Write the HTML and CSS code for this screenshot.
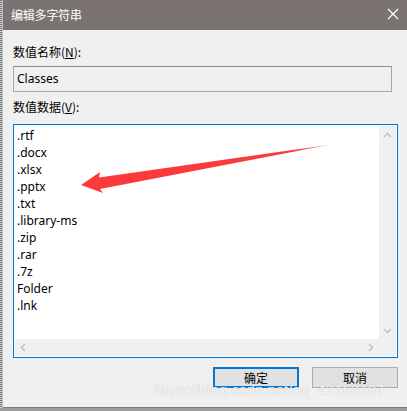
FILE: index.html
```html
<!DOCTYPE html>
<html lang="zh-CN">
<head>
<meta charset="utf-8">
<title>编辑多字符串</title>
<link rel="stylesheet" href="styles.css">
</head>
<body>
<div class="screen">
  <div class="edge"></div>
  <div class="window">
    <div class="titlebar">
      <span class="title">编辑多字符串</span>
      <svg class="close" width="12" height="12" viewBox="0 0 12 12"><path d="M1 1 L11 11 M11 1 L1 11" stroke="#fff" stroke-width="1.2" fill="none"/></svg>
    </div>
    <div class="content">
      <div class="label">数值名称(<u>N</u>):</div>
      <div class="textbox">Classes</div>
      <div class="label label2">数值数据(<u>V</u>):</div>
      <div class="listbox">
        <div class="list">
          <div>.rtf</div>
          <div>.docx</div>
          <div>.xlsx</div>
          <div>.pptx</div>
          <div>.txt</div>
          <div>.library-ms</div>
          <div>.zip</div>
          <div>.rar</div>
          <div>.7z</div>
          <div>Folder</div>
          <div>.lnk</div>
        </div>
        <div class="vscroll">
          <svg width="9" height="6" viewBox="0 0 9 6"><path d="M1 5 L4.5 1.5 L8 5" stroke="#c2c2c2" stroke-width="1.6" fill="none"/></svg>
          <svg width="9" height="6" viewBox="0 0 9 6"><path d="M1 1 L4.5 4.5 L8 1" stroke="#c2c2c2" stroke-width="1.6" fill="none"/></svg>
        </div>
        <div class="hscroll">
          <svg width="6" height="9" viewBox="0 0 6 9"><path d="M5 1 L1.5 4.5 L5 8" stroke="#c2c2c2" stroke-width="1.6" fill="none"/></svg>
          <svg width="6" height="9" viewBox="0 0 6 9"><path d="M1 1 L4.5 4.5 L1 8" stroke="#c2c2c2" stroke-width="1.6" fill="none"/></svg>
        </div>
        <div class="corner"></div>
      </div>
      <div class="buttons">
        <div class="btn btn-default">确定</div>
        <div class="btn">取消</div>
      </div>
    </div>
  </div>
  <div class="watermark">https://blog.csdn.net/qq_42168187</div>
  <svg class="arrow" width="407" height="411" viewBox="0 0 407 411">
    <defs>
      <linearGradient id="fade" x1="80" y1="0" x2="332" y2="0" gradientUnits="userSpaceOnUse">
        <stop offset="0.85" stop-color="#fb3b3b"/>
        <stop offset="1" stop-color="#fb3b3b" stop-opacity="0.3"/>
      </linearGradient>
    </defs>
    <polygon points="81,185 100,172 99,177.5 331,144.5 100,189 103,193" fill="url(#fade)"/>
  </svg>
</div>
</body>
</html>
```

FILE: styles.css
```css
* { box-sizing: border-box; }
html, body { margin: 0; padding: 0; }
body {
  width: 407px;
  height: 411px;
  overflow: hidden;
  background: #9c9c9c;
  font-family: "Noto Sans", "Noto Sans CJK SC", sans-serif;
  font-size: 12px;
  color: #000;
}
.screen {
  position: relative;
  width: 407px;
  height: 411px;
  display: flex;
}
.edge {
  width: 3px;
  height: 408px;
  background: repeating-linear-gradient(#6e6e6e 0 1px, #d8d8d8 1px 2px);
  border-right: 1px solid #bdbdbd;
}
.window {
  flex: 1;
  height: 408px;
  display: flex;
  flex-direction: column;
  background: #f0f0f0;
  border-bottom: 1px solid #7c7c7c;
}
.titlebar {
  height: 30px;
  flex: none;
  background: #7b7372;
  color: #fff;
  display: flex;
  align-items: center;
  justify-content: space-between;
  padding: 0 8px 1px 8px;
}
.title {
  font-family: "Noto Sans CJK SC", sans-serif;
  font-size: 12px;
  letter-spacing: -0.2px;
}
.close { margin-top: -1px; }
.content {
  padding: 0 4px 0 10px;
  display: flex;
  flex-direction: column;
}
.label {
  font-family: "Noto Sans CJK SC", sans-serif;
  height: 16px;
  line-height: 16px;
  margin-top: 14px;
  margin-bottom: 6px;
}
.label2 { margin-top: 7px; margin-bottom: 9px; }
.label u { text-underline-offset: 1px; }
.textbox {
  height: 26px;
  width: 379px;
  border: 1px solid #a8a8a8;
  border-top-color: #8a8a8a;
  background: #f0f0f0;
  line-height: 24px;
  padding-left: 3px;
}
.listbox {
  width: 385px;
  height: 234px;
  border: 1px solid #0078d7;
  background: #fff;
  padding: 1px;
  display: grid;
  grid-template-columns: 1fr 17px;
  grid-template-rows: 1fr 17px;
}
.list {
  padding: 1px 0 0 2px;
  line-height: 17px;
}
.vscroll {
  background: #f0f0f0;
  display: flex;
  flex-direction: column;
  justify-content: space-between;
  align-items: center;
  padding: 6px 0 5px;
}
.hscroll {
  background: #f0f0f0;
  display: flex;
  justify-content: space-between;
  align-items: center;
  padding: 0 5px 0 5px;
}
.corner { background: #f0f0f0; }
.buttons {
  display: flex;
  justify-content: flex-end;
  gap: 13px;
  margin-top: 9px;
  width: 385px;
}
.btn {
  width: 86px;
  height: 21px;
  background: #e1e1e1;
  border: 1px solid #adadad;
  font-family: "Noto Sans CJK SC", sans-serif;
  display: flex;
  align-items: center;
  justify-content: center;
  padding-bottom: 1px;
}
.btn-default {
  border: 2px solid #0078d7;
}
.watermark {
  position: absolute;
  left: 154px;
  top: 381px;
  font-family: "Liberation Sans", sans-serif;
  font-size: 15px;
  line-height: 18px;
  color: rgba(255, 255, 255, 0.85);
  text-shadow: 0 0 1px rgba(110, 110, 110, 0.45);
  white-space: nowrap;
}
.arrow {
  position: absolute;
  left: 0;
  top: 0;
  pointer-events: none;
}
```
